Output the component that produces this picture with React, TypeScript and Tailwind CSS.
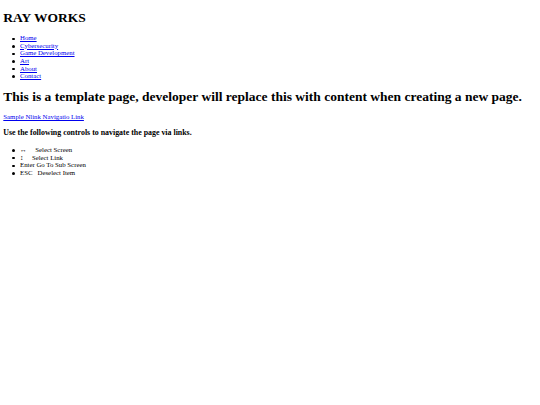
function Item({ children }: { children: React.ReactNode }) {
  return (
    <li className="flex items-center">
      <span className="mr-[5.3px] mt-[1.5px] h-[2.4px] w-[2.4px] shrink-0 rounded-full bg-black" />
      <span>{children}</span>
    </li>
  );
}

export default function App() {
  const nav = ["Home", "Cybersecurity", "Game Development", "Art", "About", "Contact"];
  const link = "text-[#0000EE] underline";
  return (
    <div className="min-h-[405px] bg-white px-[3.3px] pt-px font-['Liberation_Serif','Times_New_Roman',serif] text-[6.8px] leading-[7.6px] text-black">
      <h1 className="mt-[9.2px] text-[13.5px] font-bold leading-[15.6px]">RAY WORKS</h1>
      <ul className="mt-[8.4px] pl-[9px]">
        {nav.map((n) => (
          <Item key={n}>
            <a href="#" className={link}>{n}</a>
          </Item>
        ))}
      </ul>
      <h1 className="mt-[9.4px] text-[13.5px] font-bold leading-[15.6px]">
        This is a template page, developer will replace this with content when creating a new page.
      </h1>
      <p className="mt-[8.4px]">
        <a href="#" className={link}>Sample Nlink Navigatio Link</a>
      </p>
      <h3 className="mt-[7.7px] text-[7.9px] font-bold leading-[9px]">
        Use the following controls to navigate the page via links.
      </h3>
      <ul className="mt-[8.7px] pl-[9px]">
        <Item>↔&nbsp;&nbsp;&nbsp;&nbsp;&nbsp;Select Screen</Item>
        <Item>↕&nbsp;&nbsp;&nbsp;&nbsp;&nbsp;Select Link</Item>
        <Item>Enter Go To Sub Screen</Item>
        <Item>ESC&nbsp;&nbsp;&nbsp;Deselect Item</Item>
      </ul>
    </div>
  );
}
